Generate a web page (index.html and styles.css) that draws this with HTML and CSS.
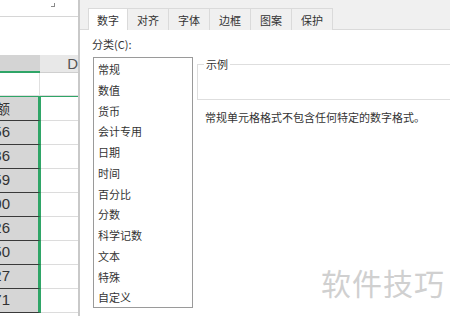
FILE: index.html
```html
<!DOCTYPE html>
<html lang="zh-CN">
<head>
<meta charset="UTF-8" />
<title>设置单元格格式</title>
<link rel="stylesheet" href="styles.css">
</head>
<body>
	<div class="sheet">
		<div class="namebar"><span class="corner"></span></div>
		<div class="formula"></div>
		<div class="colhead">
			<div class="hc"></div>
			<div class="hd">D</div>
		</div>
		<div class="row first">
			<div class="cc"></div>
			<div class="cd"></div>
		</div>
		<div class="selection">
			<div class="row"><div class="cc sel"><span class="hd-text">额</span></div><div class="cd"></div></div>
			<div class="row"><div class="cc sel">1256</div><div class="cd"></div></div>
			<div class="row"><div class="cc sel">1236</div><div class="cd"></div></div>
			<div class="row"><div class="cc sel">1259</div><div class="cd"></div></div>
			<div class="row"><div class="cc sel">1200</div><div class="cd"></div></div>
			<div class="row"><div class="cc sel">1226</div><div class="cd"></div></div>
			<div class="row"><div class="cc sel">1250</div><div class="cd"></div></div>
			<div class="row"><div class="cc sel">1227</div><div class="cd"></div></div>
			<div class="row"><div class="cc sel">1271</div><div class="cd"></div></div>
		</div>
	</div>

	<div class="dialog">
		<div class="tabs">
			<div class="tab active">数字</div>
			<div class="tab">对齐</div>
			<div class="tab">字体</div>
			<div class="tab">边框</div>
			<div class="tab">图案</div>
			<div class="tab">保护</div>
		</div>
		<div class="page">
			<div class="caption">分类(C):</div>
			<div class="body">
				<ul class="list">
					<li>常规</li>
					<li>数值</li>
					<li>货币</li>
					<li>会计专用</li>
					<li>日期</li>
					<li>时间</li>
					<li>百分比</li>
					<li>分数</li>
					<li>科学记数</li>
					<li>文本</li>
					<li>特殊</li>
					<li>自定义</li>
				</ul>
				<div class="detail">
					<fieldset class="sample">
						<legend>示例</legend>
					</fieldset>
					<p class="desc">常规单元格格式不包含任何特定的数字格式。</p>
				</div>
			</div>
		</div>
	</div>

	<div class="watermark">软件技巧</div>
</body>
</html>
```
FILE: styles.css
```css
body {
	margin: 0;
	width: 450px;
	height: 316px;
	overflow: hidden;
	display: flex;
	background-color: white;
	font-family: "Noto Sans CJK SC", "Liberation Sans", sans-serif;
	font-size: 11px;
	color: #333;
}

/* spreadsheet on the left */
.sheet {
	width: 78px;
	border-right: 2px solid #c9c9c9;
	overflow: hidden;
	flex-shrink: 0;
}

.namebar {
	height: 13px;
	border-bottom: 1px solid #d6d6d6;
}

.corner {
	display: block;
	width: 3px;
	height: 3px;
	margin: 3px 0 0 51px;
	border-right: 1px solid #8a8a8a;
	border-bottom: 1px solid #8a8a8a;
}

.formula {
	height: 38px;
}

.colhead {
	display: flex;
	height: 18px;
}

.hc {
	width: 40px;
	background-color: #d4d4d4;
	border-bottom: 2px solid #2fa567;
	box-sizing: border-box;
}

.hd {
	flex: 1;
	background-color: #e8e8e8;
	border-bottom: 1px solid #cfcfcf;
	box-sizing: border-box;
	text-align: right;
	padding-right: 0;
	font-family: "Liberation Sans", sans-serif;
	font-size: 15px;
	line-height: 18px;
	color: #555;
}

.row {
	display: flex;
	height: 24px;
}

.row.first {
	height: 23px;
}

.cc {
	width: 40px;
	box-sizing: border-box;
	border-bottom: 1px solid #e0e0e0;
	border-right: 1px solid #e0e0e0;
}

.cd {
	flex: 1;
	box-sizing: border-box;
	border-bottom: 1px solid #dcdcdc;
}

.selection {
	border-top: 2px solid #2fa567;
	margin-top: -1px;
}

.selection .cc.sel {
	width: 41px;
	background-color: #d6d6d6;
	border-bottom: 1px solid #3a3a3a;
	border-right: 3px solid #2fa567;
	display: flex;
	justify-content: flex-end;
	align-items: center;
	padding: 0 28px 2px 0;
	overflow: hidden;
	white-space: nowrap;
	font-family: "Liberation Sans", sans-serif;
	font-size: 15px;
	color: #333;
}

.hd-text {
	font-family: "Noto Sans CJK SC", sans-serif;
	font-size: 14px;
}

/* format cells dialog */
.dialog {
	flex: 1;
	display: flex;
	flex-direction: column;
	background-color: #f0f0f0;
	overflow: hidden;
}

.tabs {
	display: flex;
	height: 30px;
	box-sizing: border-box;
	padding: 8px 0 0 8px;
	border-bottom: 1px solid #dadada;
}

.tab {
	height: 22px;
	line-height: 22px;
	padding: 0 9px;
	border: 1px solid #dadada;
	border-right: none;
	background-color: #f0f0f0;
	color: #333;
}

.tab:last-child {
	border-right: 1px solid #dadada;
}

.tab.active {
	background-color: white;
	padding: 0 8px;
	height: 23px;
	margin-bottom: -1px;
}

.page {
	flex: 1;
	background-color: white;
	padding: 7px 0 0 12px;
}

.caption {
	line-height: 14px;
	height: 14px;
}

.body {
	display: flex;
	margin-top: 6px;
}

.list {
	list-style: none;
	margin: 0 0 0 1px;
	padding: 1px 0 0 4px;
	width: 100px;
	height: 251px;
	box-sizing: border-box;
	border: 1px solid #9a9a9a;
	flex-shrink: 0;
}

.list li {
	line-height: 20.75px;
	height: 20.75px;
}

.detail {
	width: 300px;
	margin-left: 4px;
	flex-shrink: 0;
}

.sample {
	margin: 0;
	padding: 0;
	height: 43px;
	box-sizing: border-box;
	border: 1px solid #dedede;
}

.sample legend {
	margin-left: 6px;
	padding: 0 2px;
	line-height: 14px;
}

.desc {
	margin: 10px 0 0 8px;
	line-height: 14px;
}

.watermark {
	position: absolute;
	left: 321px;
	top: 263px;
	font-size: 30px;
	line-height: 38px;
	color: #d0d0d0;
	letter-spacing: 1px;
}
```
